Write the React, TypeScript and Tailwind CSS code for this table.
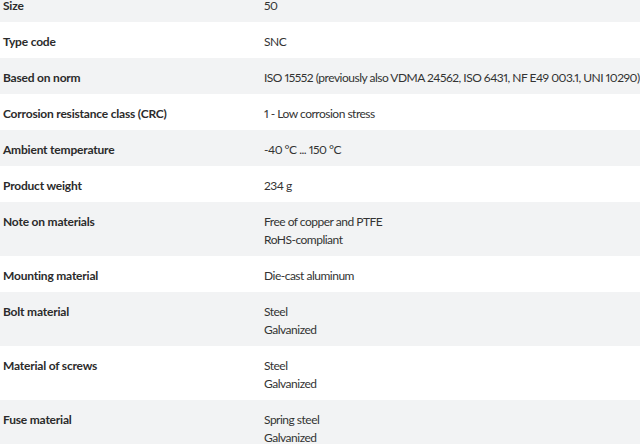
import React from "react";

const specs: { label: string; value: string[] }[] = [
    { label: "Size", value: ["50"] },
    { label: "Type code", value: ["SNC"] },
    { label: "Based on norm", value: ["ISO 15552 (previously also VDMA 24562, ISO 6431, NF E49 003.1, UNI 10290)"] },
    { label: "Corrosion resistance class (CRC)", value: ["1 - Low corrosion stress"] },
    { label: "Ambient temperature", value: ["-40 °C ... 150 °C"] },
    { label: "Product weight", value: ["234 g"] },
    { label: "Note on materials", value: ["Free of copper and PTFE", "RoHS-compliant"] },
    { label: "Mounting material", value: ["Die-cast aluminum"] },
    { label: "Bolt material", value: ["Steel", "Galvanized"] },
    { label: "Material of screws", value: ["Steel", "Galvanized"] },
    { label: "Fuse material", value: ["Spring steel", "Galvanized"] },
];

export default function App() {
    return (
        <div className="w-[640px] h-[444px] overflow-hidden bg-white font-['Lato',sans-serif] text-[12px] leading-[18px] text-[#333]">
            {/* first row is cut off at the top of the shot */}
            <div className="-mt-[14px] flex flex-col">
                {specs.map((row, i) => (
                    <div
                        key={row.label}
                        className={`grid grid-cols-[264px_1fr] pt-[11px] pb-[7px] whitespace-nowrap ${i % 2 === 0 ? "bg-[#f2f3f4]" : "bg-white"}`}
                    >
                        <div className="pl-[3px] font-bold tracking-[-0.2px] text-[#2b2b2b]">{row.label}</div>
                        <div className="flex flex-col tracking-[-0.5px] proportional-nums">
                            {row.value.map((v) => (
                                <span key={v}>{v}</span>
                            ))}
                        </div>
                    </div>
                ))}
            </div>
        </div>
    );
}
